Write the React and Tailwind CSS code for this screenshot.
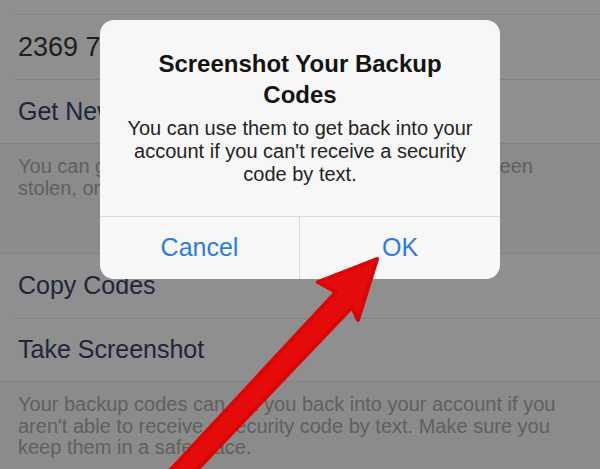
import React from "react";

const font = { fontFamily: '"Liberation Sans", Arial, sans-serif' };

const Row = ({ children, inset = true, h = "h-[65px]", text = "text-[#21253a]", size = "text-[25px]" }) => (
  <div className={`${h} flex ${inset ? "ml-[15px] pl-[3px] border-b border-[#838383]" : "pl-[18px]"}`}>
    <div className={`flex items-center ${size} ${text} whitespace-nowrap`}>{children}</div>
  </div>
);

const Arrow = () => (
  <svg className="absolute left-0 top-0 pointer-events-none" width="600" height="469" viewBox="0 0 600 469">
    <polygon
      points="166,475 336,292 318,282 377,259 358,320 352,307 192,475"
      fill="#e60b0b"
      stroke="#dc0404"
      strokeWidth="4"
      strokeLinejoin="round"
    />
  </svg>
);

export default function App() {
  return (
    <div className="relative w-[600px] h-[469px] overflow-hidden bg-[#8b8b8b]" style={font}>
      {/* settings list under the dim */}
      <div className="bg-[#8f8f8f] border-b border-[#838383]">
        <div className="h-[15px] ml-[15px] border-b border-[#838383]" />
        <Row size="text-[27px]" text="text-[#1e1e1e]">2369 7481 0526</Row>
        <Row inset={false} h="h-[63px]">Get New Codes</Row>
      </div>
      <div className="h-[109px] pt-[11px] pl-[18px] text-[20px] leading-[22px] text-[#606060] whitespace-nowrap">
        <div className="flex justify-between w-[515px]">
          <span>You can get new codes if you</span>
          <span>think they have been</span>
        </div>
        <div>stolen, or if you've used most of them.</div>
      </div>
      <div className="bg-[#8f8f8f] border-t border-b border-[#838383]">
        <Row>Copy Codes</Row>
        <Row inset={false} h="h-[62px]">Take Screenshot</Row>
      </div>
      <div className="pt-[12px] pl-[18px] text-[20px] leading-[21.5px] text-[#606060] whitespace-nowrap">
        <div>Your backup codes can get you back into your account if you</div>
        <div>aren't able to receive a security code by text. Make sure you</div>
        <div>keep them in a safe place.</div>
      </div>

      {/* alert */}
      <div className="absolute left-[100px] top-[20px] w-[400px] rounded-[14px] bg-[#f7f7f7] overflow-hidden">
        <div className="pt-[28px] pb-[30px] text-center">
          <div className="text-[24px] leading-[31px] font-bold text-[#141414]">
            Screenshot Your Backup
            <br />
            Codes
          </div>
          <div className="mt-[7px] text-[20px] leading-[23px] text-[#242424]">
            You can use them to get back into your
            <br />
            account if you can't receive a security
            <br />
            code by text.
          </div>
        </div>
        <div className="grid grid-cols-2 border-t border-[#dcdcdc] h-[63px]">
          <div className="flex items-center justify-center text-[25px] text-[#2f7be6] border-r border-[#dcdcdc]">Cancel</div>
          <div className="flex items-center justify-center text-[25px] text-[#2f7be6]">OK</div>
        </div>
      </div>

      <Arrow />
    </div>
  );
}
